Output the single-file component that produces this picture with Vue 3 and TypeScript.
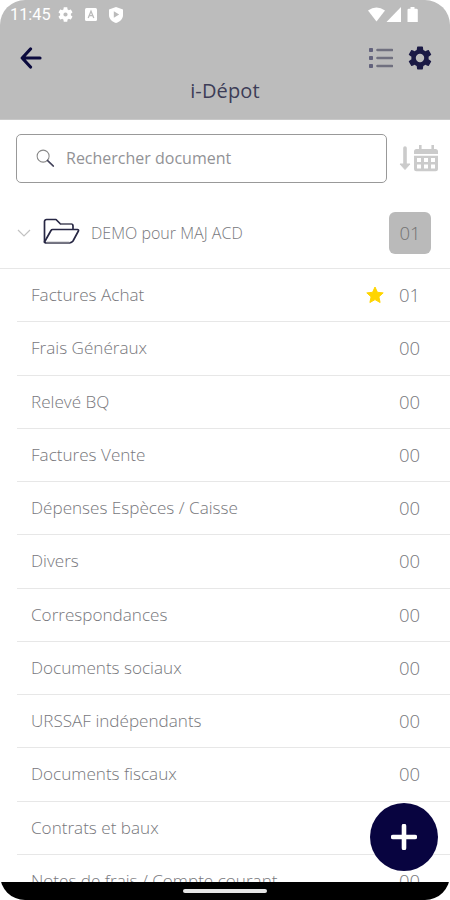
<script setup lang="ts">
interface Folder {
  name: string
  count: string
  starred?: boolean
}

const folders: Folder[] = [
  { name: 'Factures Achat', count: '01', starred: true },
  { name: 'Frais Généraux', count: '00' },
  { name: 'Relevé BQ', count: '00' },
  { name: 'Factures Vente', count: '00' },
  { name: 'Dépenses Espèces / Caisse', count: '00' },
  { name: 'Divers', count: '00' },
  { name: 'Correspondances', count: '00' },
  { name: 'Documents sociaux', count: '00' },
  { name: 'URSSAF indépendants', count: '00' },
  { name: 'Documents fiscaux', count: '00' },
  { name: 'Contrats et baux', count: '00' },
  { name: 'Notes de frais / Compte courant', count: '00' },
]

const gearPath =
  'M19.14 12.94c.04-.3.06-.61.06-.94s-.02-.64-.07-.94l2.03-1.58c.18-.14.23-.41.12-.61l-1.92-3.32c-.12-.22-.37-.29-.59-.22l-2.39.96c-.5-.38-1.03-.7-1.62-.94l-.36-2.54c-.04-.24-.24-.41-.48-.41h-3.84c-.24 0-.43.17-.47.41l-.36 2.54c-.59.24-1.13.57-1.62.94l-2.39-.96c-.22-.08-.47 0-.59.22L2.73 8.87c-.12.21-.08.47.12.61l2.03 1.58c-.05.3-.08.63-.08.94s.02.64.07.94l-2.03 1.58c-.18.14-.23.41-.12.61l1.92 3.32c.12.22.37.29.59.22l2.39-.96c.5.38 1.03.7 1.62.94l.36 2.54c.05.24.24.41.48.41h3.84c.24 0 .44-.17.47-.41l.36-2.54c.59-.24 1.13-.56 1.62-.94l2.39.96c.22.08.47 0 .59-.22l1.92-3.32c.12-.22.07-.47-.12-.61z'
</script>

<template>
  <div class="screen">
    <header class="header">
      <div class="status">
        <span class="time">11:45</span>
        <svg class="s-gear" viewBox="2 2 20 20"><path fill-rule="evenodd" fill="#fff" :d="gearPath + 'M12 14.8a2.8 2.8 0 1 1 0-5.6 2.8 2.8 0 0 1 0 5.6z'" /></svg>
        <svg class="s-app" viewBox="0 0 12 13"><rect width="12" height="13" rx="1.5" fill="#fff" /><path d="M3.2 10 6 3.2 8.800 10M4.300 7.700h3.400" fill="none" stroke="#bbb" stroke-width="1.300" /></svg>
        <svg class="s-shield" viewBox="0 0 14 16"><path fill="#fff" d="M7 0 14 2.500V8c0 4-3 6.700-7 8-4-1.300-7-4-7-8V2.500z" /><path fill="#bbb" d="M4.800 4.300 10.200 7.500 4.800 10.700z" /></svg>
        <svg class="s-right" viewBox="0 0 52 16">
          <path fill="#fff" d="M0 3.500Q8.500-2.500 17 3.500L8.500 14.500z" />
          <path fill="#fff" d="M33 0v15H18.500z" />
          <path fill="#fff" d="M42.500 0h4v1.800h2a1.300 1.300 0 0 1 1.300 1.300V15H39.500V3.100a1.300 1.300 0 0 1 1.300-1.300h1.700z" />
        </svg>
      </div>
      <div class="toolbar">
        <svg class="back" viewBox="0 0 22 22"><path d="M10.500 2 2.200 11l8.300 9M2.500 11H20" fill="none" stroke="#0b0a3d" stroke-width="3.200" stroke-linecap="round" stroke-linejoin="round" /></svg>
        <svg class="list-icon" viewBox="0 0 24 20">
          <g fill="#62627c"><rect width="4" height="4" rx=".8" /><rect y="8" width="4" height="4" rx=".8" /><rect y="16" width="4" height="4" rx=".8" /></g>
          <path d="M8.500 2h14.500M8.500 10h14.500M8.500 18h14.500" stroke="#70707f" stroke-width="2.600" stroke-linecap="round" />
        </svg>
        <svg class="gear" viewBox="2 2 20 20"><path fill-rule="evenodd" fill="#1b1a45" :d="gearPath + 'M12 15.500a3.500 3.500 0 1 1 0-7 3.500 3.500 0 0 1 0 7z'" /></svg>
      </div>
      <h1 class="title"><span>i-Dépot</span></h1>
    </header>

    <div class="search-row">
      <div class="search">
        <svg class="loupe" viewBox="0 0 20 20"><circle cx="7.500" cy="7.500" r="6.300" fill="none" stroke="#888" stroke-width="1.100" /><path d="m12 12 6.300 6" stroke="#42425a" stroke-width="1.600" stroke-linecap="round" /></svg>
        <span class="placeholder">Rechercher document</span>
      </div>
      <svg class="sort" viewBox="0 0 40 28">
        <path d="M6 3v17" stroke="#cbcbcb" stroke-width="3.600" stroke-linecap="round" />
        <path d="M1 19h10L6 24.500z" fill="#cbcbcb" stroke="#cbcbcb" stroke-linejoin="round" />
        <path fill="#cbcbcb" fill-rule="evenodd" d="M20 0h2.600v4h9.800V0H35v4h1.500a2.500 2.500 0 0 1 2.500 2.500V9H15V6.500A2.500 2.500 0 0 1 17.500 4H20zM15 10.800h24v13a2.500 2.500 0 0 1-2.500 2.500h-19A2.500 2.500 0 0 1 15 23.800zM18 13v4h4v-4zm7 0v4h4v-4zm7 0v4h4v-4zm-14 6.500v4h4v-4zm7 0v4h4v-4zm7 0v4h4v-4z" />
      </svg>
    </div>

    <div class="root-row">
      <svg class="chevron" viewBox="0 0 14 8"><path d="m1 1 6 6 6-6" fill="none" stroke="#c2c2c2" stroke-width="1.200" /></svg>
      <svg class="folder" viewBox="0 0 37 27" fill="none" stroke-linejoin="round" stroke-linecap="round">
        <path d="M30 10.500V8a2 2 0 0 0-2-2H17.500L13 1.500H3.500a2 2 0 0 0-2 2V24" stroke="#272744" stroke-width="1.700" />
        <path d="M1.500 24 8 12.500a2 2 0 0 1 1.800-1H34.500a1 1 0 0 1 .9 1.500L30 23a4 4 0 0 1-3.300 1.800H2.500A1 1 0 0 1 1.500 24z" stroke="#272744" stroke-width="1.700" />
        <path d="M4 24.800h22M18.500 6h9.500" stroke="#777784" stroke-width="1.900" />
      </svg>
      <span class="root-name">DEMO pour MAJ ACD</span>
      <span class="badge">01</span>
    </div>

    <ul class="list">
      <li v-for="folder in folders" :key="folder.name" class="row">
        <span class="name">{{ folder.name }}</span>
        <svg v-if="folder.starred" class="star" viewBox="0 0 18 18"><path fill="#ffd500" stroke="#ffd500" stroke-linejoin="round" d="m9 1 2.400 5.300 5.800.6-4.300 3.900 1.200 5.700L9 13.600l-5.100 2.900 1.200-5.700L.8 6.900l5.800-.6z" /></svg>
        <span class="count">{{ folder.count }}</span>
      </li>
    </ul>

    <button class="fab" aria-label="Ajouter">
      <svg viewBox="0 0 26 26"><path d="M13 2v22M2 13h22" stroke="#fff" stroke-width="4.600" stroke-linecap="round" /></svg>
    </button>
    <footer class="navbar"><span class="handle"></span></footer>
  </div>
</template>

<style>
body {
  background: #fff;
}
</style>

<style scoped>
* {
  box-sizing: border-box;
}
.screen {
  position: relative;
  display: flex;
  flex-direction: column;
  width: 450px;
  height: 900px;
  overflow: hidden;
  border-radius: 25px;
  background: #fff;
  font-family: 'Open Sans', sans-serif;
  font-weight: 300;
  color: #77777c;
}
svg {
  display: block;
  flex: none;
}
.header {
  flex: none;
  height: 120px;
  background: #bcbcbc;
  border-bottom: 1px solid #c9c9c9;
}
.status {
  display: flex;
  align-items: center;
  height: 29px;
  padding: 0 30px 0 10px;
}
.time {
  width: 48px;
  font: 400 16.3px/29px Roboto, sans-serif;
  color: #fff;
}
.s-gear {
  width: 15px;
  height: 15px;
}
.s-app {
  width: 12px;
  height: 13px;
  margin-left: 12px;
}
.s-shield {
  width: 14px;
  height: 16px;
  margin-left: 12px;
}
.s-right {
  width: 52px;
  height: 16px;
  margin-left: auto;
}
.toolbar {
  display: flex;
  align-items: center;
  height: 58px;
  padding: 0 18px 0 20px;
}
.back {
  width: 22px;
  height: 22px;
}
.list-icon {
  width: 24px;
  height: 20px;
  margin-left: auto;
}
.gear {
  width: 24px;
  height: 24px;
  margin-left: 15px;
}
.title {
  margin: 0;
  font-size: 20px;
  font-weight: 400;
  line-height: 7px;
  letter-spacing: 0.15px;
  text-align: center;
  color: #3d3d57;
}
.search-row {
  display: flex;
  flex: none;
  align-items: center;
  height: 77px;
  padding: 0 11px 0 16px;
}
.search {
  display: flex;
  align-items: center;
  width: 371px;
  height: 49px;
  padding-left: 19px;
  border: 1px solid #999;
  border-radius: 5px;
}
.loupe {
  width: 19px;
  height: 19px;
}
.placeholder {
  margin: -2px 0 0 11px;
  font-size: 16px;
  line-height: 24px;
  font-weight: 400;
  color: #929296;
}
.sort {
  width: 40px;
  height: 28px;
  margin-left: auto;
}
.root-row {
  display: flex;
  flex: none;
  align-items: center;
  height: 72px;
  padding: 0 19px 0 17px;
  border-bottom: 1px solid #e7e7e7;
}
.chevron {
  width: 14px;
  height: 8px;
}
.folder {
  width: 37px;
  height: 27px;
  margin: -2px 0 0 12px;
}
.root-name {
  margin-left: 11px;
  font-size: 16.05px;
}
.badge {
  display: flex;
  align-items: center;
  justify-content: center;
  width: 42px;
  height: 42px;
  margin-left: auto;
  border-radius: 6px;
  background: #bababa;
  font-size: 18.5px;
  color: #737373;
}
.list {
  flex: 1;
  min-height: 0;
  margin: 0;
  padding: 0;
  overflow: hidden;
  list-style: none;
}
.row {
  display: flex;
  align-items: center;
  height: 53.25px;
  margin-left: 17px;
  padding: 0 30px 1px 14px;
  border-bottom: 1px solid #e7e7e7;
  font-size: 17.1px;
}
.name {
  flex: 1;
}
.star {
  width: 18px;
  height: 18px;
}
.count {
  margin-left: 15px;
  font-size: 18.5px;
}
.fab {
  position: absolute;
  right: 12px;
  bottom: 29px;
  display: grid;
  place-items: center;
  width: 68px;
  height: 68px;
  padding: 0;
  border: 0;
  border-radius: 50%;
  background: #080440;
}
.fab svg {
  width: 26px;
  height: 26px;
}
.navbar {
  display: flex;
  flex: none;
  align-items: center;
  justify-content: center;
  height: 18px;
  background: #000;
}
.handle {
  width: 84px;
  height: 4px;
  border-radius: 2px;
  background: #e5e5e5;
}
</style>
